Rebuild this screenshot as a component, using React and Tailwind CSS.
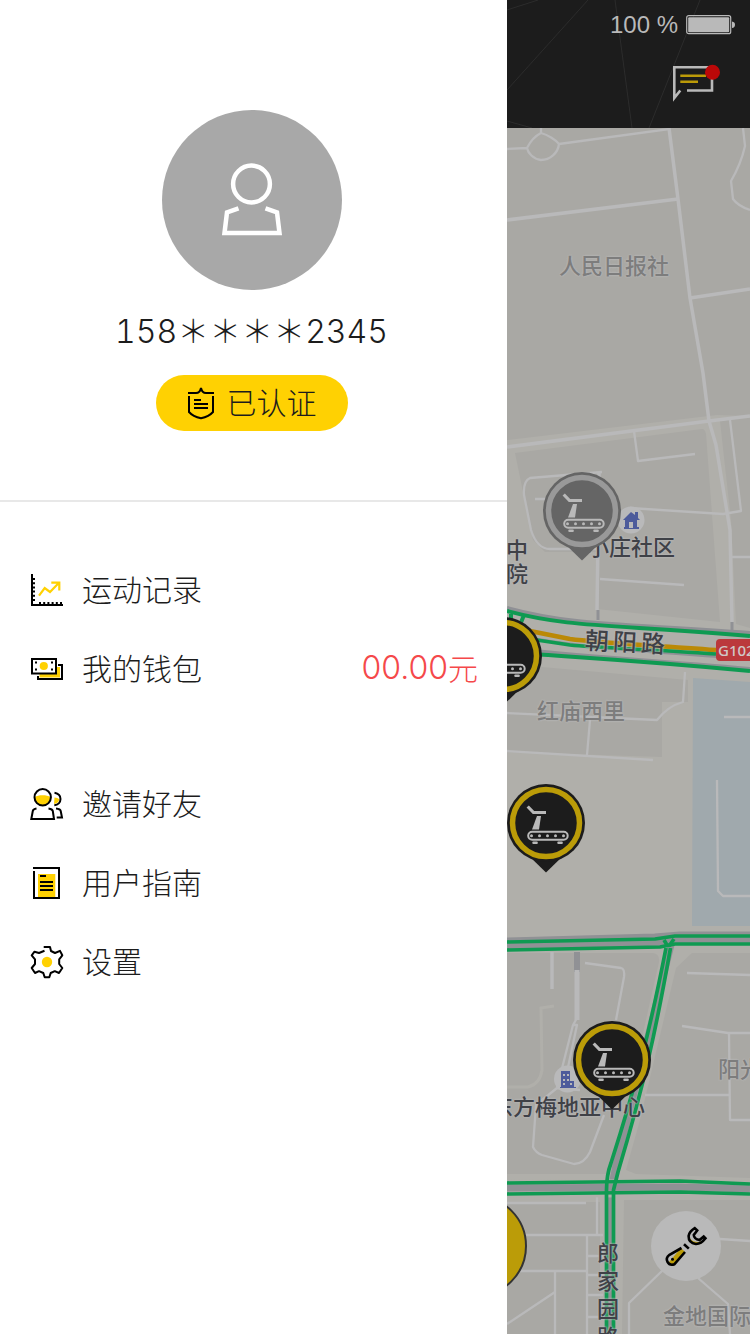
import React from "react";

const FONT = "font-['Noto_Sans_CJK_SC',sans-serif]";

function ChartIcon() {
  return (
    <svg className="size-[34px] shrink-0" viewBox="0 0 34 34" fill="none" strokeWidth="2" aria-hidden="true">
      <path d="M2 1V32H33" stroke="#000" />
      <path d="M4 5V29" stroke="#000" strokeDasharray="2 2.2" />
      <path d="M9 30H32" stroke="#000" strokeDasharray="2 2.2" />
      <path d="M9 22.7 14.7 15 20 19 29 9.7M21.3 9.7H29.3V17.5" stroke="#ffd102" strokeWidth="2.2" />
    </svg>
  );
}

function WalletIcon() {
  return (
    <svg className="size-[34px] shrink-0" viewBox="0 0 34 34" fill="none" aria-hidden="true">
      <path d="M27 15H30V25.5H9.5V21H27Z" fill="#ffd102" />
      <path d="M28 13H32V27H8V24" stroke="#000" strokeWidth="2" />
      <rect x="2" y="7" width="24" height="14.5" fill="#fff" stroke="#000" strokeWidth="2" />
      <circle cx="13.8" cy="14" r="4.1" fill="#ffd102" />
      <path d="M5 9.5h2v2H5zM21 9.5h2v2h-2zM5 16.5h2v2H5zM21 16.5h2v2h-2z" fill="#000" />
    </svg>
  );
}

function FriendsIcon() {
  return (
    <svg className="size-[34px] shrink-0" viewBox="0 0 34 34" fill="none" aria-hidden="true">
      <path d="M5 10C8 7.5 17 7.5 20.5 10C20.5 21 5 21 5 10Z" fill="#ffd102" />
      <path d="M24.5 10.5Q27.5 10.5 29.5 12.3Q28 16.8 24 17Z" fill="#ffd102" />
      <circle cx="12.7" cy="10.3" r="8.2" stroke="#000" strokeWidth="2" />
      <path d="M24.5 5.8C28.5 6.5 30.5 9 30.5 12C30.5 15.5 28 18 24.3 18.3" stroke="#000" strokeWidth="2" />
      <path d="M6.5 21.5Q3.2 22 2.8 24L1.3 32H24L22.8 24Q22.3 22 18.5 21.5M26 21.5Q30.3 22 30.7 24L32 30.5H26.7" stroke="#000" strokeWidth="2" />
    </svg>
  );
}

function GuideIcon() {
  return (
    <svg className="size-[34px] shrink-0" viewBox="0 0 34 34" fill="none" strokeWidth="2" aria-hidden="true">
      <rect x="8" y="8" width="17.3" height="23" fill="#ffd102" />
      <path d="M3 2H29V32H4V5" stroke="#000" />
      <path d="M10 10H16M10 16H23M10 20H23M10 24H23" stroke="#000" />
    </svg>
  );
}

function GearIcon() {
  return (
    <svg className="size-[34px] shrink-0" viewBox="0 0 34 34" fill="none" aria-hidden="true">
      <path
        d="M13.7 2H20L21 6 25 8 30 5.9 32.3 10.3 29.2 14.3V19L32.3 23 29 28 24.8 26.2 20.7 28 19.3 32.3H14.7L13.3 28 9 26.2 5 28 1.7 23 5 19V14.3L1.7 10.3 4.5 6.7 9 8 14.5 5.8"
        stroke="#000"
        strokeWidth="2"
        strokeLinejoin="round"
      />
      <circle cx="17" cy="17" r="5.2" fill="#ffd102" />
    </svg>
  );
}

function ShieldIcon() {
  return (
    <svg className="h-[34px] w-7" viewBox="0 0 28 34" fill="none" stroke="#000" strokeWidth="2" aria-hidden="true">
      <path d="M1 7H9Q13 7 14 2Q15 7 19 7H27" />
      <path d="M2 10V26Q6 30.5 14 32.3Q22 30.5 26 26V10" />
      <path d="M7 14H14M7 18H21M7 22H21" />
    </svg>
  );
}

function PersonIcon() {
  return (
    <svg className="h-[76px] w-16" viewBox="0 0 64 76" fill="none" stroke="#fff" strokeWidth="4.5" aria-hidden="true">
      <circle cx="31.5" cy="22" r="18.4" />
      <path d="M18.5 46.3 7 50.5 4.5 71H59.5L57 50.5 45.5 46.3" />
    </svg>
  );
}

function Pin({ label, ring, body, className }) {
  return (
    <button type="button" aria-label={label} className={`absolute h-[92px] w-20 ${className}`}>
      <svg className="size-full" viewBox="0 0 80 92" aria-hidden="true">
        <path d="M22 72 40 89.5 58 72Z" fill={body} />
        <circle cx="40" cy="40" r="39" fill={body} />
        <circle cx="40" cy="40" r="33.5" fill="none" stroke={ring} strokeWidth="5.5" />
        <g fill="none" stroke="#b9b9b9">
          <path d="M21.7 23.5 27.5 29.5H40" strokeWidth="3.2" />
          <rect x="22.2" y="48.7" width="39.5" height="8" rx="4" strokeWidth="2" />
        </g>
        <g fill="#b9b9b9">
          <path d="M31 33H35L33 46.5H26Z" />
          <rect x="26.3" y="58.5" width="5.5" height="2.5" rx="1" />
          <rect x="51.3" y="58.5" width="5.5" height="2.5" rx="1" />
          <circle cx="25.5" cy="52.7" r="1.5" />
          <circle cx="33.5" cy="52.7" r="1.5" />
          <circle cx="41.5" cy="52.7" r="1.5" />
          <circle cx="49.5" cy="52.7" r="1.5" />
          <circle cx="57.5" cy="52.7" r="1.5" />
        </g>
      </svg>
    </button>
  );
}

function Streets() {
  return (
    <svg className="absolute inset-0 size-full" viewBox="507 128 243 1206" preserveAspectRatio="xMinYMin slice" fill="none" aria-hidden="true">
      <rect x="507" y="128" width="243" height="1206" fill="#b0afaa" />

      {/* blocks */}
      <g fill="#a9a8a4">
        <path d="M507 128H750V416L717 415 507 440Z" />
        <path d="M515 453 702 429Q705 429 706 434L720 622 597 609 599 552H545L533 540Z" />
        <path d="M720 421 750 417V628L736 624 731 520Z" />
        <path d="M507 664 688 680V702H662V757L507 752Z" />
        <path d="M507 953H653Q660 954 659 962L628 1100 607 1174H507Z" />
        <path d="M692 953H750V1178L636 1174 626 1170 640 1120 676 968Z" />
        <path d="M507 1202H600V1334H507ZM624 1200H750V1334H622Z" />
      </g>
      <path d="M693 678 750 682V926H692Z" fill="#a0a9ad" />

      {/* minor streets */}
      <g stroke="#b9b9ba" strokeWidth="2.3" strokeLinejoin="round">
        <path d="M507 149 527 148C531 140 537 135 541 133C548 135 556 140 559 144C558 153 550 160 541 160C533 159 528 153 527 148M541 133V128M559 144 669 129" />
        <path d="M743 128 745 146Q741 164 731 181L733 199Q738 206 750 210" />
        <path d="M634 431 638 461 695 454M730 420 741 511 723 514 630 508M602 472 530 478Q523 481 524 495L531 530Q537 549 550 549H597M535 499H560M600 579 684 585M730 557H750" />
        <path d="M507 713 657 720Q668 706 683 702L685 672M590 720 587 755M507 751 653 760" />
        <path d="M724 717H750M717 780 718 891 723 896H750" />
        <path d="M687 973 750 975M682 1026 728 1033H750M729 1033 730 1120H750" />
        <path d="M585 963 621 968Q625 969 624 977L616 1020M645 1095H730" />
        <path d="M577 1018 573 1025 557 1088 536 1105 533 1147Q536 1153 542 1155L574 1164Q584 1164 590 1152L604 1115M573 1025H577L567 1072M556 1088 580 1090" />
        <path d="M507 1203H586M597 1195V1234M507 1235H603M587 1235V1334M507 1271H586M555 1271V1334M507 1324 555 1292M587 1256H603M587 1275H603M587 1295H603M587 1317H603" />
        <path d="M663 1270 629 1303V1334M698 1278 728 1304 730 1334M720 1239 750 1241" />
      </g>
      <path d="M507 1087H528Q540 1084 542 1070L541 1008 554 1006" stroke="#b0afaa" strokeWidth="3" />
      <g stroke="#b9b9ba" strokeWidth="3.5" strokeLinejoin="round">
        <path d="M669 128 678 199 690 298 703 373 709 421 716 445 730 530 732 622M507 220 678 199M690 298 750 289M507 447 709 421 750 416M599 472 597 610" />
        <path d="M552 952V989" />
      </g>
      <path d="M577 952V972" stroke="#909195" strokeWidth="6" />
      <path d="M577 970V1020" stroke="#b9b9ba" strokeWidth="5" />
      <path d="M598 610V620M732 622V630" stroke="#909195" strokeWidth="3" />

      {/* Chaoyang Road */}
      <g>
        <path d="M507 608C570 625 610 623 750 633" stroke="#8f9095" strokeWidth="4" />
        <path d="M507 634C580 648 620 649 750 659" stroke="#8f9095" strokeWidth="3" />
        <path d="M507 648C570 656 620 658 750 669" stroke="#8f9095" strokeWidth="4" />
        <path d="M507 611C570 628 610 624 750 636" stroke="#0f9a52" strokeWidth="4" />
        <path d="M507 652C580 658 620 659 750 671" stroke="#0f9a52" strokeWidth="4" />
        <path d="M511 614V625M524 615 520 625" stroke="#0f9a52" strokeWidth="4" />
        <path d="M520 629 570 639C600 643 650 645 716 650" stroke="#bb8906" strokeWidth="4.5" />
        <path d="M530 639 570 645C600 648 650 649 716 654" stroke="#0f9a52" strokeWidth="3.5" />
      </g>

      {/* east-west artery and the avenue crossing it */}
      <g>
        <path d="M507 944 655 940 680 938H750" stroke="#909195" strokeWidth="13" />
        <path d="M671 945 616 1165 611 1190V1334" stroke="#909195" strokeWidth="7" />
        <path d="M507 1188 750 1189" stroke="#b0afaa" strokeWidth="18" />
        <path d="M507 1188 680 1187 750 1189" stroke="#909195" strokeWidth="7" />
      </g>
      <g stroke="#0f9a52" strokeWidth="3.7" strokeLinejoin="round">
        <path d="M507 942 655 939 675 936H750M507 950 660 947 675 944H750" />
        <path d="M507 1183 680 1181 750 1184M507 1194 680 1192 750 1194" />
        <path d="M666 948C650 1030 636 1085 611 1163Q606.5 1175 606.5 1190V1334M670.5 948C656 1030 644 1085 618 1172L613.5 1190V1334" />
        <path d="M664 940 667 945M674 939 669 946" />
      </g>

      <circle cx="631" cy="520" r="13.5" fill="#b9b9ba" />
      <path d="M623 520 631 512 635 515V512H638V518L640 520H637V527H639V529H624V527H625V520ZM629 522V528H633V522Z" fill="#4d5b9b" fillRule="evenodd" />
      <circle cx="567.5" cy="1079" r="13.5" fill="#b9b9ba" />
      <path d="M561 1071H570V1081H574V1087H576V1088H560V1087H561ZM563 1074V1076H565V1074ZM567 1074V1076H569V1074ZM563 1079V1081H565V1079ZM567 1079V1081H569V1079ZM563 1083V1085H565V1083ZM570 1083V1085H572V1083Z" fill="#4d5b9b" fillRule="evenodd" />
    </svg>
  );
}

function MapLabel({ className, children }) {
  return (
    <span className={`absolute font-medium [text-shadow:0_0_2px_#b9b9ba,0_0_2px_#b9b9ba] ${className}`}>
      {children}
    </span>
  );
}

function StatusBar() {
  return (
    <div className="flex h-[50px] items-center justify-end gap-2 pr-[14px] font-['Liberation_Sans',sans-serif] text-2xl text-[#b9b9b9]">
      <span>100 %</span>
      <svg className="h-5 w-[50px]" viewBox="0 0 50 20" aria-label="Battery full">
        <rect x=".7" y=".7" width="44" height="18" rx="2" fill="none" stroke="#b9b9b9" strokeWidth="1.2" />
        <rect x="2.2" y="2.2" width="41" height="15" rx="1" fill="#b9b9b9" />
        <path d="M46 6.5Q49 7 49 9.7Q49 12.5 46 13Z" fill="#b9b9b9" />
      </svg>
    </div>
  );
}

function MapScreen() {
  return (
    <main className="flex min-w-0 flex-1 flex-col overflow-hidden">
      <header className="relative h-32 bg-[#1c1c1c]">
        <svg className="absolute inset-0 size-full" viewBox="0 0 243 128" preserveAspectRatio="xMinYMin slice" stroke="#2c2c2c" fill="none" aria-hidden="true">
          <path d="M0 10 31 0M0 90 81 0M108 0 125 128M193 0 142 128M0 121 25 128" />
        </svg>
        <div className="relative">
          <StatusBar />
          <div className="flex justify-end pr-7">
            <button type="button" aria-label="消息" className="mt-3 h-10 w-[52px]">
              <svg className="size-full" viewBox="0 0 52 40" fill="none" aria-hidden="true">
                <path d="M17 28.5H42V5.3H4.3V36L10.3 28.5" stroke="#b9b9b9" strokeWidth="2.6" />
                <path d="M10.3 13.7H36M10.3 19.7H28" stroke="#bb9a08" strokeWidth="2.6" />
                <circle cx="42.5" cy="10.3" r="7.5" fill="#bb0808" />
              </svg>
            </button>
          </div>
        </div>
      </header>

      <section aria-label="地图" className="relative flex-1 overflow-hidden">
        <Streets />
        <MapLabel className="left-[52px] top-[120px] whitespace-nowrap text-[22px] text-[#7d7d7d]">人民日报社</MapLabel>
        <MapLabel className="left-20 top-[401px] whitespace-nowrap text-[22px] text-[#3f4147]">小庄社区</MapLabel>
        <MapLabel className="left-[-1px] top-[408px] w-[22px] text-[22px] leading-6 text-[#3f4147]">中院</MapLabel>
        <MapLabel className="left-[78px] top-[497px] flex rotate-3 gap-1 text-2xl text-[#3f4147]">
          <span>朝</span>
          <span>阳</span>
          <span>路</span>
        </MapLabel>
        <span className="absolute left-[209px] top-[511px] rounded-sm bg-[#bb393c] px-[2px] font-['Noto_Sans',sans-serif] text-[15px] font-medium leading-[22px] text-[#d0c8c8]">
          G102
        </span>
        <MapLabel className="left-[30px] top-[565px] whitespace-nowrap text-[22px] text-[#7d7d7d]">红庙西里</MapLabel>
        <MapLabel className="left-[-16px] top-[961px] whitespace-nowrap text-[22px] text-[#3f4147]">东方梅地亚中心</MapLabel>
        <MapLabel className="left-[211px] top-[923px] whitespace-nowrap text-[22px] text-[#7d7d7d]">阳光</MapLabel>
        <MapLabel className="left-[156px] top-[1170px] whitespace-nowrap text-[22px] text-[#7d7d7d]">金地国际</MapLabel>
        <MapLabel className="left-[90px] top-[1109px] w-[22px] text-[22px] leading-7 text-[#3f4147]">郎家园路</MapLabel>

        <Pin label="小庄社区健身点" body="#656565" ring="#999" className="left-[35px] top-[343px]" />
        <Pin label="朝阳路健身点" body="#1c1c1c" ring="#bb9c08" className="left-[-44px] top-[488px]" />
        <Pin label="红庙西里健身点" body="#1c1c1c" ring="#bb9c08" className="left-[-1px] top-[655px]" />
        <Pin label="东方梅地亚健身点" body="#1c1c1c" ring="#bb9c08" className="left-[65px] top-[892px]" />

        <button type="button" aria-label="扫码" className="absolute left-[-82px] top-[1067px] size-[102px] rounded-full border-2 border-[#333] bg-[#bb9c08]" />
        <button type="button" aria-label="报修" className="absolute left-36 top-[1083px] size-[70px] rounded-full bg-[#b9b9b9]">
          <svg className="size-full" viewBox="0 0 70 70" fill="none" aria-hidden="true">
            <path d="M30 37 34 41 25 52.5 20 54 18 51Z" fill="#bb9c08" />
            <path d="M38 23C38 31 46 32 51 30L50 33 43 33.5 37.5 29Z" fill="#bb9c08" />
            <g stroke="#000" strokeWidth="2.6">
              <path d="M30.5 37 18.5 43.8C13 48 17 55.5 23.5 53.2L34 41" />
              <path d="M33 33.3 37.8 37.6" />
              <path d="M43.8 17.2 46.2 19.4 42.8 24Q43 28 48.5 29L52.7 25.6 54.5 27.3Q50 33.2 44.8 33Q37.5 32 37.6 25Q38.300 20.5 43.8 17.2Z" />
            </g>
            <circle cx="21.5" cy="48.3" r="1.5" fill="#000" />
          </svg>
        </button>
      </section>
    </main>
  );
}

function MenuItem({ icon, label, value }) {
  return (
    <li>
      <a href="#" className="flex h-[79px] items-center gap-[18px] pl-[30px] pr-[29px]">
        {icon}
        <span className="flex-1 pb-0.5">{label}</span>
        {value && (
          <span className="flex items-center pb-0.5 text-[#f5484a]">
            <span className="font-['Inter',sans-serif] text-[32px]">{value}</span>元
          </span>
        )}
      </a>
    </li>
  );
}

export default function App() {
  return (
    <div className={`flex min-h-screen bg-white font-light text-[#1c1c1c] ${FONT}`}>
      <aside className="w-[67.6%] shrink-0 bg-white">
        <section className="flex flex-col items-center border-b-2 border-[#e8e8e8] pb-[69px] pr-1 pt-[110px]">
          <div className="flex size-[180px] items-center justify-center rounded-full bg-[#a8a8a8]">
            <PersonIcon />
          </div>
          <p className="mt-4 whitespace-nowrap font-['Inter','Noto_Sans_CJK_SC',sans-serif] text-[32px] leading-[52px] tabular-nums">
            158＊＊＊＊2345
          </p>
          <button type="button" className="mt-[17px] flex h-14 w-48 items-center justify-center gap-3 rounded-full bg-[#ffd102] text-[30px]">
            <ShieldIcon />
            <span className="pb-1">已认证</span>
          </button>
        </section>

        <nav className="pt-12 text-[30px]">
          <ul>
            <MenuItem icon={<ChartIcon />} label="运动记录" />
            <MenuItem icon={<WalletIcon />} label="我的钱包" value="00.00" />
          </ul>
          <ul className="mt-14">
            <MenuItem icon={<FriendsIcon />} label="邀请好友" />
            <MenuItem icon={<GuideIcon />} label="用户指南" />
            <MenuItem icon={<GearIcon />} label="设置" />
          </ul>
        </nav>
      </aside>
      <MapScreen />
    </div>
  );
}
